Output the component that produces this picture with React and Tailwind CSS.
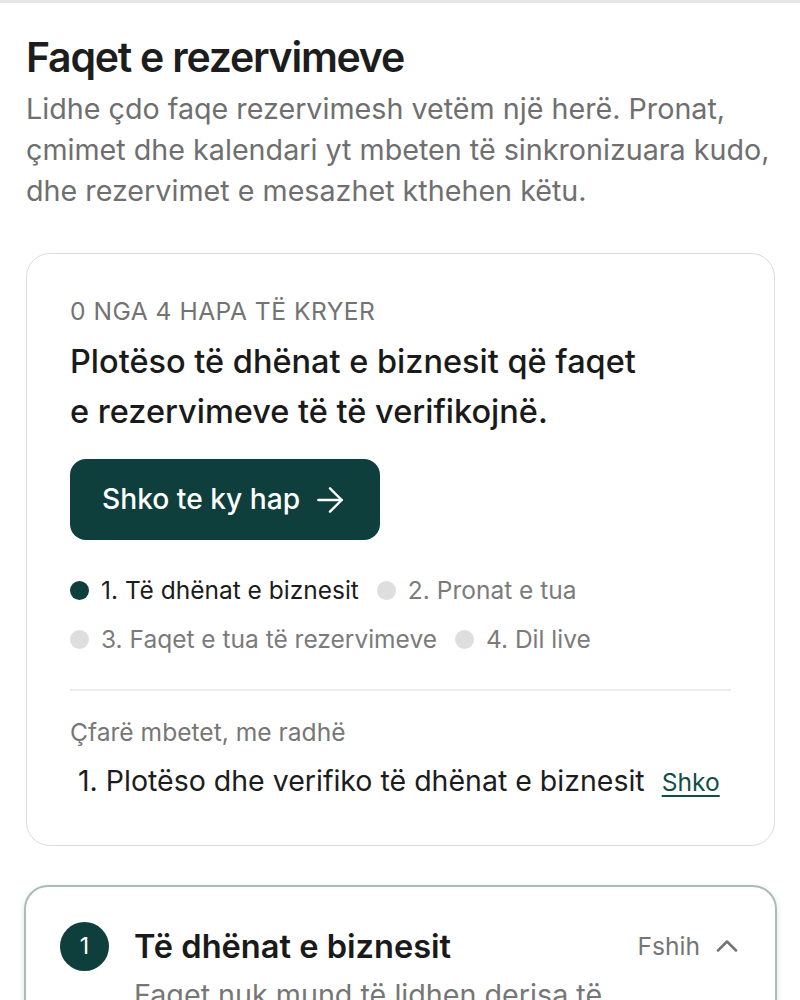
import React from "react";
import { ArrowRight, ChevronUp } from "lucide-react";

const steps = [
  { label: "1. Të dhënat e biznesit", active: true },
  { label: "2. Pronat e tua", active: false },
  { label: "3. Faqet e tua të rezervimeve", active: false },
  { label: "4. Dil live", active: false },
];

function StepPill({ label, active }) {
  return (
    <div className="flex items-center gap-[12px] h-[32px]">
      <span className={`w-[19px] h-[19px] rounded-full ${active ? "bg-[#0f3f3c]" : "bg-[#dedede]"}`} />
      <span className={`text-[24.5px] leading-[32px] ${active ? "text-[#1c1c1c]" : "text-[#7b7b7b]"}`}>{label}</span>
    </div>
  );
}

export default function App() {
  return (
    <div className="min-h-screen bg-white font-['Inter',sans-serif] overflow-hidden">
      <div className="h-[3px] bg-[#e6e6e6]" />
      <div className="pl-[26px] pr-[25px] pt-[30px]">
        <h1 className="text-[41px] leading-[48px] font-semibold tracking-[-0.03em] text-[#1d1d1d]">Faqet e rezervimeve</h1>
        <p className="mt-[7px] text-[28.7px] leading-[41px] text-[#6f6f6f]">
          Lidhe çdo faqe rezervimesh vetëm një herë. Pronat, çmimet dhe kalendari yt mbeten të sinkronizuara kudo, dhe rezervimet e mesazhet kthehen këtu.
        </p>

        {/* progress card */}
        <div className="mt-[42px] rounded-[24px] border border-[#dcdcdc] px-[43px] pt-[43px] pb-[44px]">
          <div className="text-[24.6px] leading-[28px] tracking-[0.02em] uppercase text-[#737373]">0 nga 4 hapa të kryer</div>
          <div className="mt-[12px] max-w-[580px] text-[32.5px] leading-[50px] font-medium text-[#1a1a1a]">
            Plotëso të dhënat e biznesit që faqet e rezervimeve të të verifikojnë.
          </div>
          <button className="mt-[22px] h-[81px] pl-[32px] pr-[30px] rounded-[16px] bg-[#0f3f3c] text-white flex items-center gap-[10px]">
            <span className="text-[28.2px] font-medium">Shko te ky hap</span>
            <ArrowRight className="w-[40px] h-[40px]" strokeWidth={1.45} />
          </button>
          <div className="mt-[34px] flex flex-wrap gap-x-[18px] gap-y-[17px]">
            {steps.map((s) => (
              <StepPill key={s.label} {...s} />
            ))}
          </div>
          <div className="mt-[34px] h-[2px] bg-[#ececec]" />
          <div className="mt-[26px] text-[24.6px] leading-[30px] text-[#777777]">Çfarë mbetet, me radhë</div>
          <div className="mt-[16px] pl-[8px] flex items-baseline gap-[17px]">
            <span className="text-[28.5px] leading-[36px] text-[#1c1c1c]">1. Plotëso dhe verifiko të dhënat e biznesit</span>
            <a className="text-[24.6px] text-[#0f4f4a] underline underline-offset-[4px]">Shko</a>
          </div>
        </div>

        {/* step card */}
        <div className="mt-[39px] -mx-[2px] rounded-[24px] border-2 border-[#a9bcb8] shadow-[0_2px_6px_rgba(0,0,0,0.12)] pl-[34px] pr-[30px] pt-[35px] pb-[40px]">
          <div className="flex items-center gap-[25px]">
            <div className="w-[49px] h-[49px] rounded-full bg-[#0f3f3c] text-white flex items-center justify-center text-[23px]">1</div>
            <div className="flex-1 text-[32.6px] font-semibold text-[#1a1a1a]">Të dhënat e biznesit</div>
            <div className="flex items-center gap-[9px] text-[#757575]">
              <span className="text-[24.6px]">Fshih</span>
              <ChevronUp className="w-[36px] h-[36px]" strokeWidth={1.7} />
            </div>
          </div>
          <p className="mt-[4px] pl-[74px] max-w-[600px] text-[28.7px] leading-[40px] text-[#767676]">
            Faqet nuk mund të lidhen derisa të dhënat e biznesit të jenë plotësuar dhe verifikuar.
          </p>
        </div>
      </div>
    </div>
  );
}
